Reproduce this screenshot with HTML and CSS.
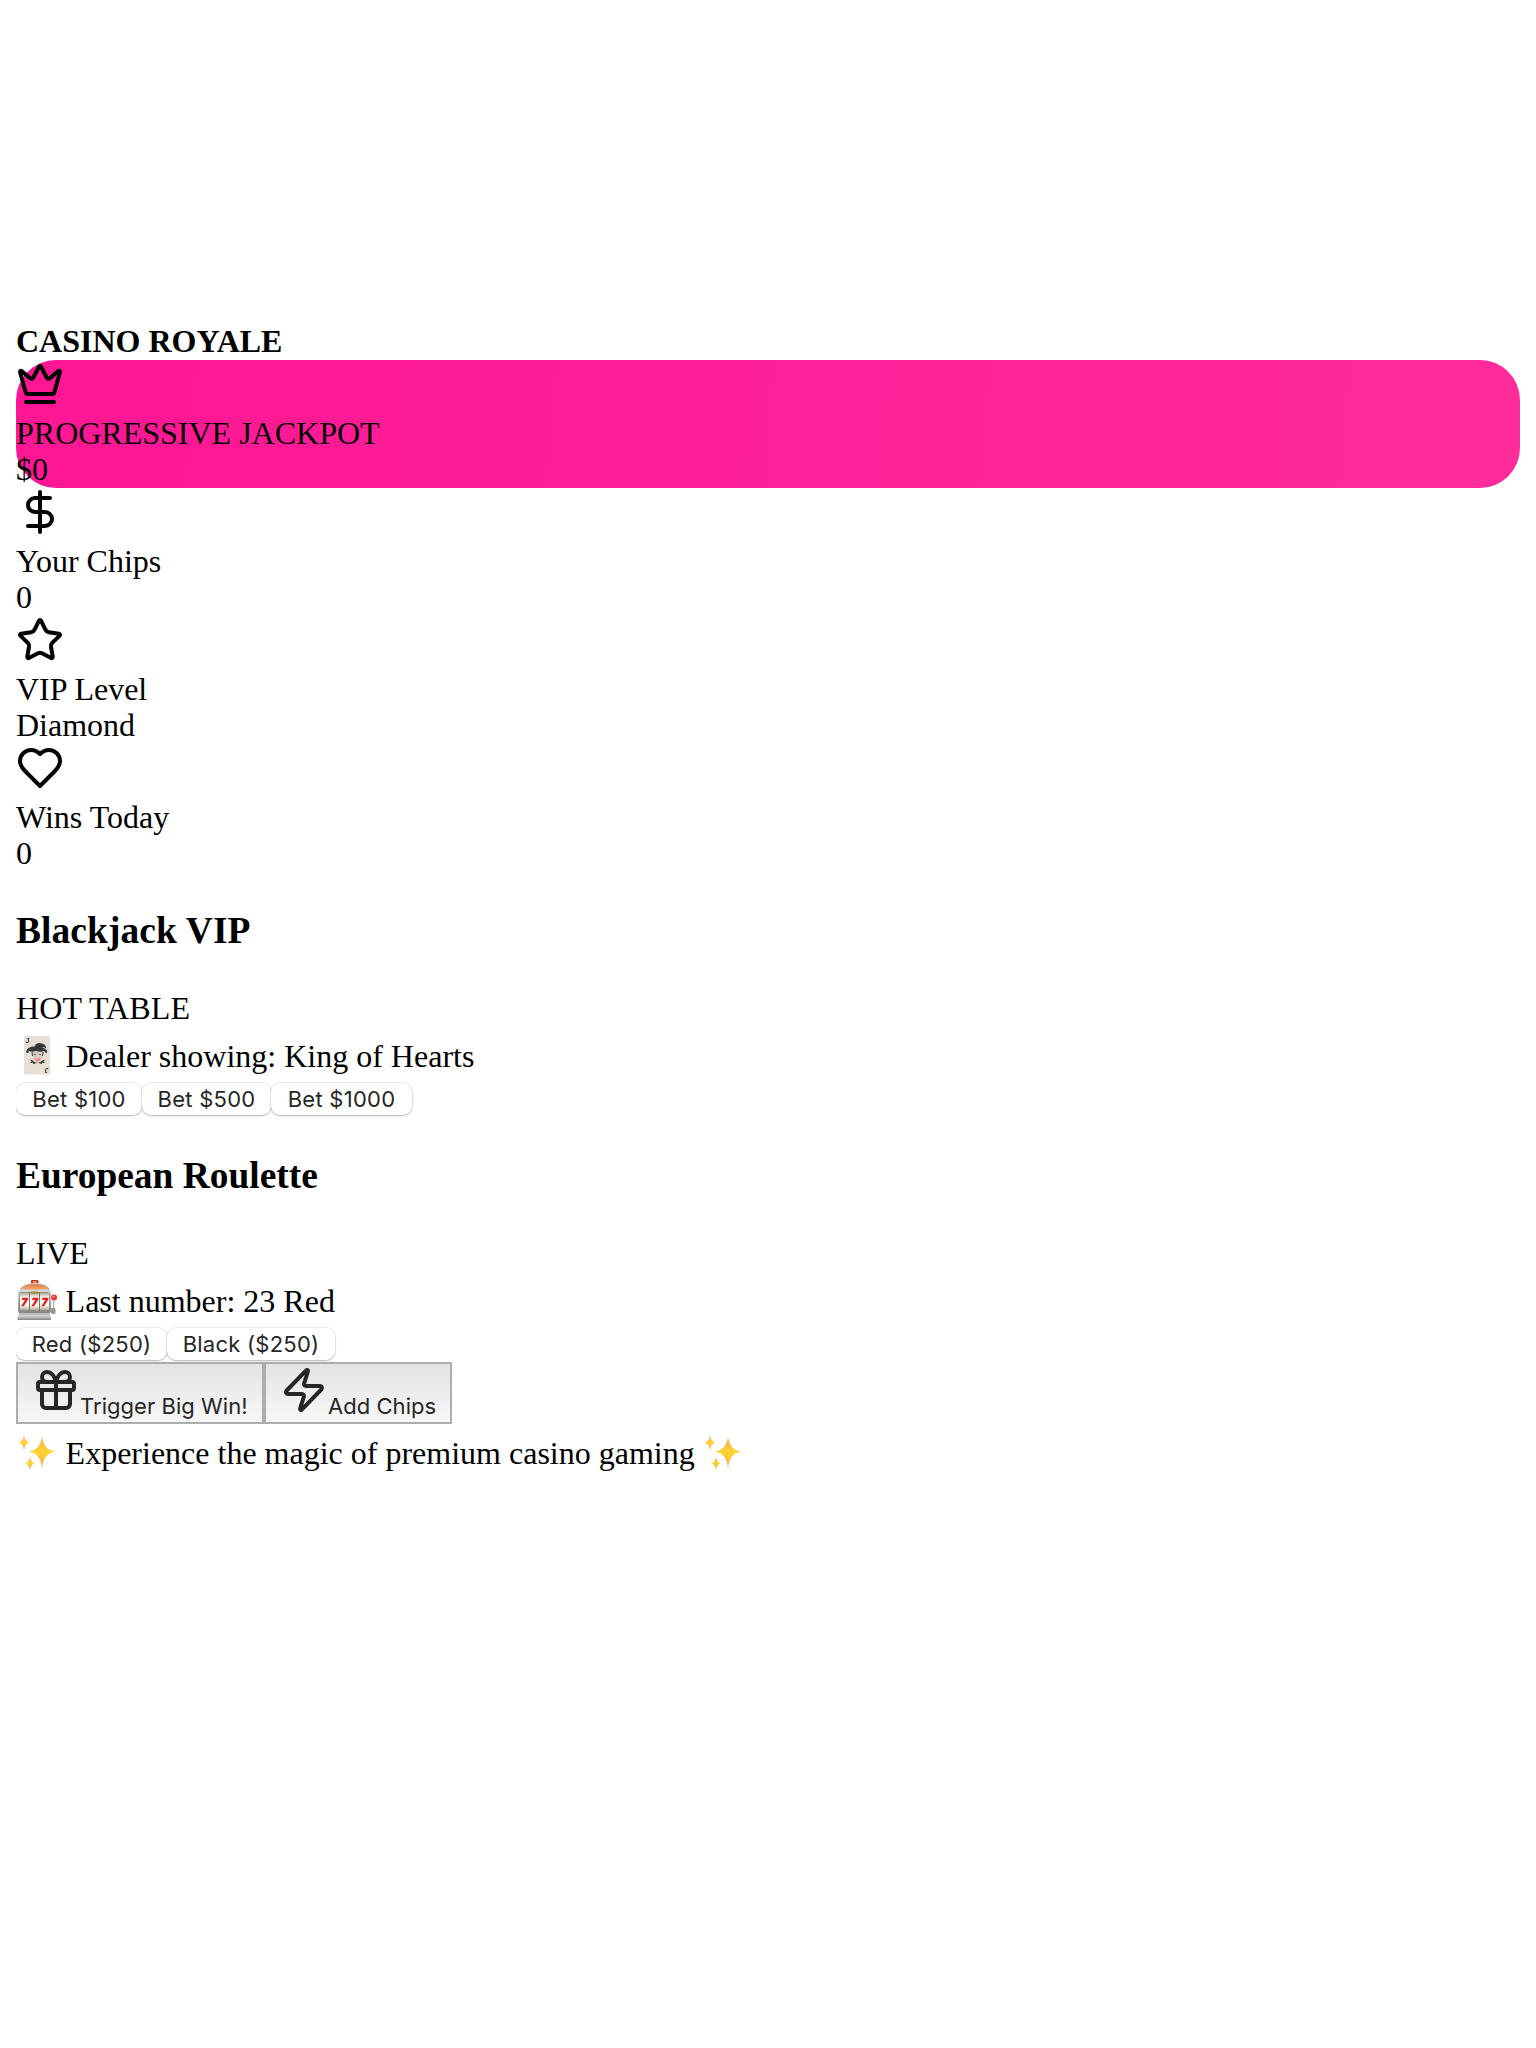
FILE: index.html
```html
<!DOCTYPE html>
<html lang="en">
<head>
<meta charset="utf-8">
<title>Casino Royale</title>
<link rel="stylesheet" href="styles.css">
</head>
<body>
<svg class="defs" aria-hidden="true">
  <defs>
    <linearGradient id="gold" x1="0" y1="0" x2="0" y2="1"><stop offset="0" stop-color="#f5ab55"/><stop offset=".5" stop-color="#ffd532"/><stop offset="1" stop-color="#f5a455"/></linearGradient>
    <linearGradient id="dome" x1="0" y1="0" x2="0" y2="1"><stop offset="0" stop-color="#d97a50"/><stop offset="1" stop-color="#ffa45e"/></linearGradient>
    <linearGradient id="metal" x1="0" y1="0" x2="0" y2="1"><stop offset="0" stop-color="#dedede"/><stop offset="1" stop-color="#858585"/></linearGradient>
    <linearGradient id="reel" x1="0" y1="0" x2="0" y2="1"><stop offset="0" stop-color="#aaa58f"/><stop offset=".3" stop-color="#fffef5"/><stop offset=".7" stop-color="#fffef5"/><stop offset="1" stop-color="#aaa58f"/></linearGradient>
    <symbol id="sparkles" viewBox="0 0 42 42">
      <g fill="url(#gold)">
        <path d="M26 4.500Q27 18.500 39 20.500Q27 22.500 26 38Q25 22.500 13 20.500Q25 18.500 26 4.500Z"/>
        <path d="M8 4Q8.600 10.500 13.500 11.500Q8.600 12.500 8 19.500Q7.400 12.500 2.500 11.500Q7.400 10.500 8 4Z"/>
        <path d="M14 25Q14.600 31.500 19 32.500Q14.600 33.500 14 39.500Q13.400 33.500 9 32.500Q13.400 31.500 14 25Z"/>
      </g>
    </symbol>
  </defs>
</svg>
<div class="canvas"></div>
<header class="title line">CASINO ROYALE</header>
<section class="stat jackpot">
  <svg class="icon" viewBox="0 0 24 24"><path d="M11.562 3.266a.5.5 0 0 1 .876 0L15.390 8.870a1 1 0 0 0 1.516.294L21.183 5.500a.5.5 0 0 1 .798.519l-2.834 10.246a1 1 0 0 1-.956.734H5.810a1 1 0 0 1-.957-.734L2.020 6.020a.5.5 0 0 1 .798-.519l4.276 3.664a1 1 0 0 0 1.516-.294z"/><path d="M5 21h14"/></svg>
  <div class="line">PROGRESSIVE JACKPOT</div>
  <div class="line">$0</div>
</section>
<section class="stat">
  <svg class="icon" viewBox="0 0 24 24"><path d="M12 2v20M17 5H9.500a3.500 3.500 0 0 0 0 7h5a3.500 3.500 0 0 1 0 7H6"/></svg>
  <div class="line">Your Chips</div>
  <div class="line">0</div>
</section>
<section class="stat">
  <svg class="icon" viewBox="0 0 24 24"><path d="M11.525 2.295a.53.53 0 0 1 .95 0l2.310 4.679a2.123 2.123 0 0 0 1.595 1.160l5.166.756a.53.53 0 0 1 .294.904l-3.736 3.638a2.123 2.123 0 0 0-.611 1.878l.882 5.140a.53.53 0 0 1-.771.560l-4.618-2.428a2.122 2.122 0 0 0-1.973 0L6.396 21.010a.53.53 0 0 1-.770-.560l.881-5.139a2.122 2.122 0 0 0-.611-1.879L2.160 9.795a.53.53 0 0 1 .294-.906l5.165-.755a2.122 2.122 0 0 0 1.597-1.160z"/></svg>
  <div class="line">VIP Level</div>
  <div class="line">Diamond</div>
</section>
<section class="stat">
  <svg class="icon" viewBox="0 0 24 24"><path d="M19 14c1.490-1.460 3-3.210 3-5.500A5.500 5.500 0 0 0 16.500 3c-1.760 0-3 .5-4.500 2-1.500-1.500-2.740-2-4.500-2A5.500 5.500 0 0 0 2 8.500c0 2.300 1.500 4.050 3 5.500l7 7Z"/></svg>
  <div class="line">Wins Today</div>
  <div class="line">0</div>
</section>
<section class="game">
  <h3 class="wide">Blackjack VIP</h3>
  <div class="line wide">HOT TABLE</div>
  <div class="note">
    <svg class="emoji" viewBox="0 0 42 42">
      <rect x="8" y="2" width="26" height="38.500" rx="1.500" fill="#e9dfd4"/>
      <text class="pip" x="9.500" y="8.800">J</text>
      <text class="pip" x="9.500" y="8.800" transform="rotate(180 21 21.200)">J</text>
      <path d="M16 17h11l-1 7-4.500 5-4.500-5z" fill="#d3cbc4"/>
      <path d="M10.500 17q1-4.500 8-4.500 1-3.500 5-3.500 6 .2 7 5.500-2.500-2-5-1 5 .5 5.500 4.500-3-1.500-5-.5l-2 .2q-4-1.500-8 0-3-.8-5.500-.7z" fill="#34383b"/>
      <circle cx="11.500" cy="17.800" r="1.300" fill="#34383b"/><circle cx="30" cy="17.500" r="1.300" fill="#34383b"/>
      <path d="M16 18l.5 4M27 18l-.5 4" stroke="#34383b"/>
      <path d="M18.200 20.500h1.500M23.200 20.500h1.500" stroke="#555"/>
      <path d="M14 25.500q2.500 0 4.500 2.500l3 1 3-1q2-2.500 4.500-2.500l-1.500 2 1.500 1.500-3.500-.3 .5 1.500-3.500-1.200h-2l-3.500 1.200 .5-1.500-3.500 .3 1.500-1.500z" fill="#34383b"/>
      <path d="M18.500 24q3 1.500 6 0-.5 3.500-3 3.500T18.500 24z" fill="#ed8580"/>
    </svg>
    <span>Dealer showing: King of Hearts</span>
  </div>
  <div class="bets"><button class="bet w126">Bet $100</button><button class="bet w129">Bet $500</button><button class="bet w141">Bet $1000</button></div>
</section>
<section class="game">
  <h3>European Roulette</h3>
  <div class="line">LIVE</div>
  <div class="note">
    <svg class="emoji slot" viewBox="0 0 42 42">
      <rect x="15" y="0" width="7.500" height="5" rx="1" fill="#b63a29"/><rect x="17" y="1" width="3.500" height="2" fill="#ef8952"/>
      <path d="M3 12Q5 3 19 3t15 9z" fill="url(#metal)"/>
      <path d="M5 9.500Q8 4 19 4t13 5.500z" fill="url(#dome)"/>
      <rect x="2" y="9.500" width="33" height="24" rx="3" fill="url(#metal)"/>
      <rect x="3.500" y="12" width="30" height="19" rx="2" fill="#77745f"/>
      <path d="M4 12.500h9v18H4zM14 12.500h9v18h-9zM24 12.500h9v18h-9z" fill="url(#reel)"/>
      <path d="M14.500 11.500h8l-1 2.500h-6z" fill="#a88842"/>
      <text class="seven" x="8.300" y="25.800">7</text><text class="seven" x="18.500" y="25.800">7</text><text class="seven" x="28.700" y="25.800">7</text>
      <path d="M3 33h31v4H3z" fill="#bdbdbd"/><rect x="1.500" y="35.500" width="33.500" height="4.500" rx=".5" fill="url(#metal)"/>
      <path d="M37.500 18v13" stroke="#b5b5b5" stroke-width="1.500"/><rect x="35" y="28" width="4.500" height="6" rx="1" fill="#999"/>
      <circle cx="38" cy="17.500" r="3" fill="#ed363c"/><circle cx="37.500" cy="16.800" r="1" fill="#ff9a96"/>
    </svg>
    <span>Last number: 23 Red</span>
  </div>
  <div class="bets"><button class="bet w151">Red ($250)</button><button class="bet w168">Black ($250)</button></div>
</section>
<div class="actions">
  <button class="action w248"><svg class="icon" viewBox="0 0 24 24"><rect x="3" y="8" width="18" height="4" rx="1"/><path d="M12 8v13M19 12v7a2 2 0 0 1-2 2H7a2 2 0 0 1-2-2v-7M7.500 8a2.500 2.500 0 0 1 0-5A4.800 8 0 0 1 12 8a4.800 8 0 0 1 4.500-5 2.500 2.500 0 0 1 0 5"/></svg><span>Trigger Big Win!</span></button>
  <button class="action w188"><svg class="icon" viewBox="0 0 24 24"><path d="M4 14a1 1 0 0 1-.780-1.630l9.900-10.200a.5.5 0 0 1 .860.460l-1.920 6.020A1 1 0 0 0 13 10h7a1 1 0 0 1 .780 1.630l-9.900 10.200a.5.5 0 0 1-.860-.460l1.920-6.020A1 1 0 0 0 11 14z"/></svg><span>Add Chips</span></button>
</div>
<footer class="note"><svg class="emoji"><use href="#sparkles"/></svg><span>Experience the magic of premium casino gaming</span><svg class="emoji"><use href="#sparkles"/></svg></footer>
</body>
</html>
```
FILE: styles.css
```css
body {
  margin: 16px;
  background: #fff;
  color: #000;
  font: 32px/34px "Liberation Serif", "Times New Roman", serif;
}
.defs { position: absolute; width: 0; height: 0; }
.canvas { height: 308px; }
.line { padding-bottom: 2px; }
.wide { letter-spacing: .1px; }
.title { font-weight: 700; }
.stat { height: 128px; }
.jackpot {
  border-radius: 40px;
  background: linear-gradient(95deg, #ff1694, #ff2b9b);
}
.icon {
  display: block;
  width: 48px;
  height: 48px;
  fill: none;
  stroke: currentColor;
  stroke-width: 2;
  stroke-linecap: round;
  stroke-linejoin: round;
}
.stat .icon { margin-bottom: 8px; }
.game { display: flow-root; height: 245px; }
.game h3 { margin: 36.5px 0 38.5px; font-size: 37.44px; line-height: 44px; }
.note {
  display: flex;
  gap: 7.6px;
  height: 34px;
  padding: 12px 0 8px;
  white-space: nowrap;
}
.emoji { width: 42px; height: 42px; margin-top: -5px; flex: none; }
.emoji.slot { margin-top: -4px; }
.pip { font: 700 7px "Liberation Sans", sans-serif; fill: #333; }
.seven {
  font: italic 900 10.5px Inter, sans-serif;
  fill: #df171b;
  stroke: #df171b;
  stroke-width: .4;
  text-anchor: middle;
}
.bets { display: flex; align-items: center; height: 36px; }
button {
  box-sizing: border-box;
  margin: 0;
  padding: 0;
  color: #262626;
  font: 22px/26px Inter, sans-serif;
  white-space: nowrap;
}
.bet {
  height: 32px;
  border: 0;
  border-radius: 9px;
  background: #fff;
  box-shadow: 0 0 1px 1px rgba(0, 0, 0, .07), 0 1px 2px rgba(0, 0, 0, .24);
  letter-spacing: .25px;
}
.w126 { width: 126px; }
.w129 { width: 129px; }
.w141 { width: 141px; }
.w151 { width: 151px; }
.w168 { width: 168px; }
.w248 { width: 248px; }
.w188 { width: 188px; }
.actions { display: flex; height: 62px; }
.action {
  display: flex;
  align-items: flex-start;
  padding: 2px 14px;
  border: 2px solid #adadad;
  background: linear-gradient(#e3e3e3, #f7f7f7);
  letter-spacing: .04px;
}
.action .icon { flex: none; }
.action span { margin-top: 27px; }
```
